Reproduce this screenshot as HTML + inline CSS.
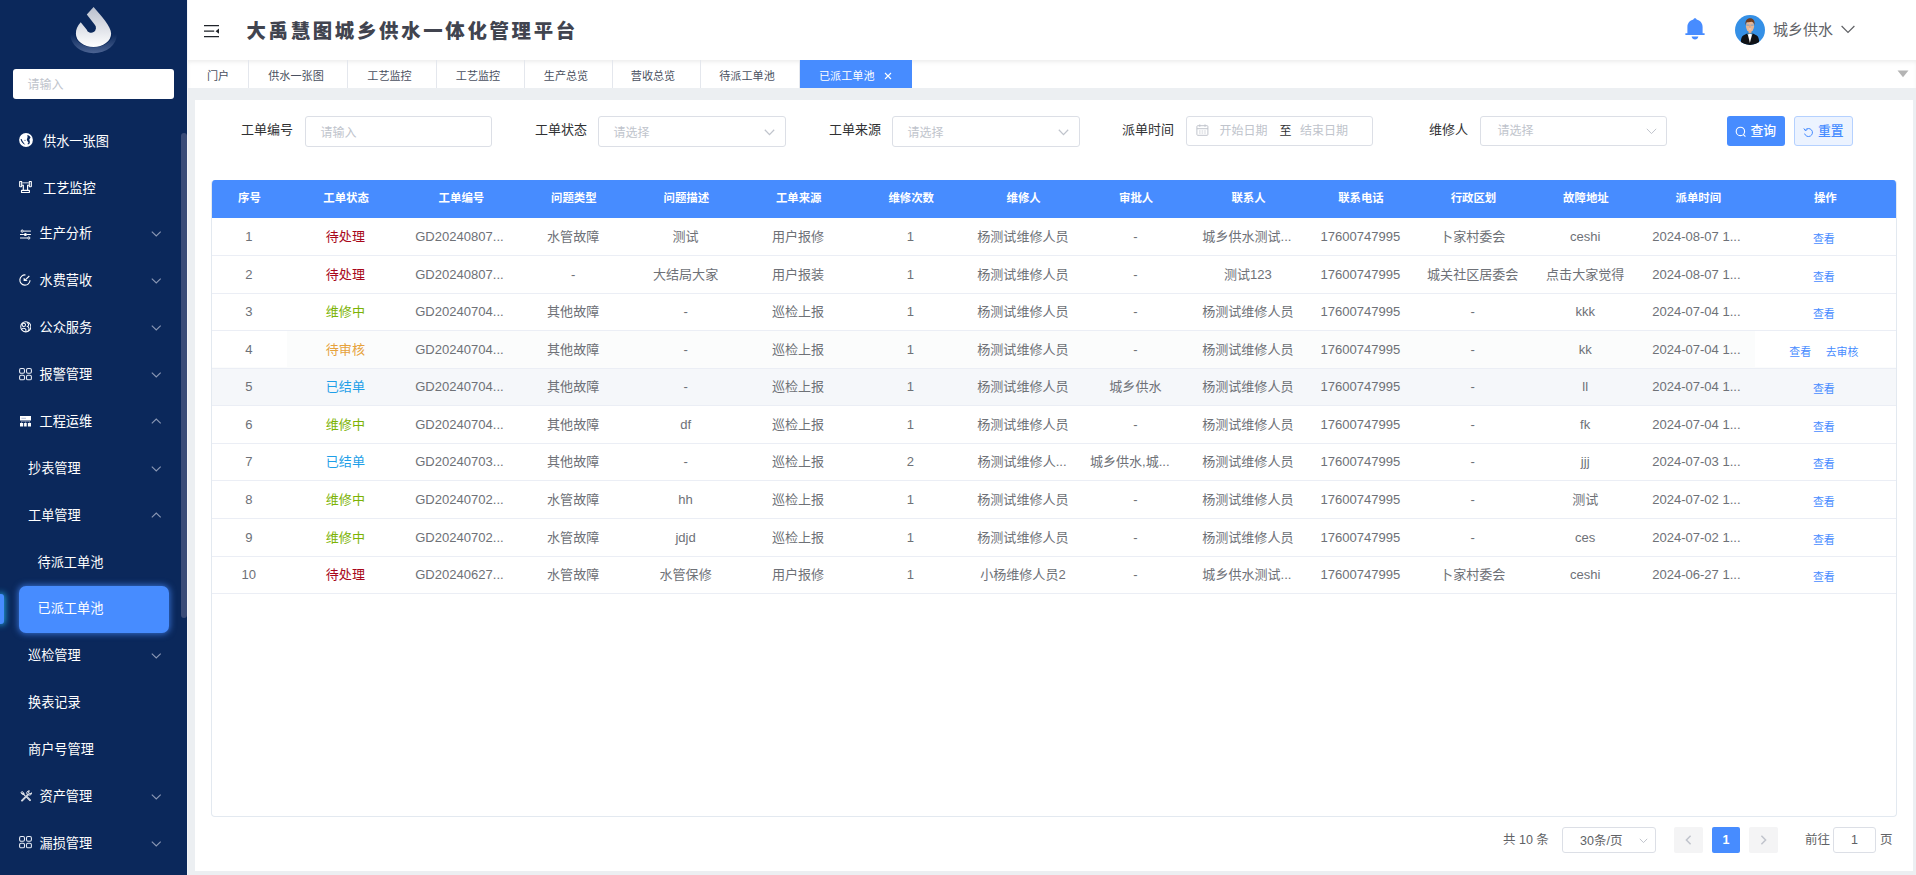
<!DOCTYPE html>
<html lang="zh-CN">
<head>
<meta charset="utf-8">
<title>大禹慧图城乡供水一体化管理平台</title>
<style>
*{box-sizing:border-box;margin:0;padding:0}
html,body{width:1916px;height:875px;overflow:hidden;background:#eceff2;
  font-family:"Liberation Sans","Noto Sans CJK SC",sans-serif;}
body{position:relative}
.abs{position:absolute}
/* ---------- sidebar ---------- */
#side{position:absolute;left:0;top:0;width:187px;height:875px;background:#0b285b;overflow:hidden}
#side .search{position:absolute;left:13px;top:69px;width:161px;height:30px;background:#fff;border-radius:3px;
  font-size:12px;color:#c0c4cc;line-height:33px;padding-left:14.5px}
.mi{position:absolute;height:20px;line-height:20px;color:#fff;font-size:13.2px;white-space:nowrap}
.chev{position:absolute;left:151px;width:10.5px;height:6px}
#active{position:absolute;left:19px;top:586px;width:150px;height:47px;border-radius:7px;background:#478cff;
  box-shadow:0 0 6px 1px rgba(71,140,255,.7)}
#bar{position:absolute;left:-2px;top:594px;width:6px;height:30px;border-radius:3px;background:#478cff;
  box-shadow:0 0 6px 1px rgba(40,200,255,.8)}
#thumb{position:absolute;left:181px;top:133px;width:6px;height:485px;border-radius:3px;background:#3a4c78}
/* ---------- header ---------- */
#head{position:absolute;left:188px;top:0;width:1728px;height:60px;background:#fff}
#title{position:absolute;left:246.5px;top:16px;height:30px;line-height:30px;font-size:19.4px;font-weight:900;letter-spacing:2.7px;color:#41444f;
  white-space:nowrap;font-family:"Liberation Sans","Noto Sans CJK SC",sans-serif}
#tabs{position:absolute;left:188px;top:60px;width:1728px;height:28px;background:#fff;
  box-shadow:inset 0 3px 4px -1px rgba(0,0,0,.075)}
.tab{position:absolute;top:0;height:28px;line-height:32.8px;font-size:11.1px;color:#495060;text-align:center;border-right:1px solid #e4e7ed;white-space:nowrap}
.tab.on{background:#478cff;color:#fff;border-right:none}
#uname{position:absolute;left:1773px;top:20px;height:20px;line-height:20px;font-size:15px;color:#606266;white-space:nowrap}
/* ---------- panel ---------- */
#panel{position:absolute;left:195px;top:100px;width:1718px;height:771px;background:#fff}
.flabel{position:absolute;top:120px;height:20px;line-height:20.6px;font-size:13px;color:#303133;white-space:nowrap}
.finput{position:absolute;top:116px;height:31px;border:1px solid #dcdfe6;border-radius:3px;background:#fff;
  font-size:12px;color:#c0c4cc;line-height:33px;padding-left:14.5px;white-space:nowrap}
.btn{position:absolute;top:116px;height:30px;border-radius:3px;font-size:12.8px;font-weight:500;line-height:30.5px;white-space:nowrap}
/* ---------- table ---------- */
#tbl{position:absolute;left:211px;top:180px;width:1686px;height:637px;border:1px solid #e3e9f0;border-top:none;border-radius:4px;overflow:hidden;background:#fff}
#tin{position:absolute;left:0;top:0;width:1684px;height:635px}
.thead{position:absolute;left:0;top:0;width:1684px;height:38px;background:#478cff}
.th{position:absolute;top:0;height:38px;line-height:36.5px;text-align:center;color:#fff;font-weight:700;font-size:11.4px;white-space:nowrap}
.tr{position:absolute;left:0;width:1684px;border-bottom:1px solid #ebeef5;background:#fff}
.tr.stripe{background:#fbfcfc}
.tr.hover{background:#f5f7fa}
.td{position:absolute;top:0;bottom:1px;line-height:var(--lh);text-align:center;color:#6e7177;font-size:13.05px;white-space:nowrap;overflow:hidden;padding-right:1.4px}
.td.el{text-align:left;padding-left:10px;padding-right:0}
.td.ops{font-size:10.9px;color:#478cff;line-height:var(--lo);padding-right:3px}
.op{margin:0 7.3px}
/* ---------- pagination ---------- */
.pg{position:absolute;font-size:12.5px;color:#606266;white-space:nowrap;height:26px;line-height:26px;top:827px}
.pbtn{position:absolute;top:827px;height:26px;border-radius:2px;background:#f4f4f5}
</style>
</head>
<body>
<!-- ================= SIDEBAR ================= -->
<div id="side">
  <svg class="abs" style="left:68px;top:4px" width="50" height="50" viewBox="0 0 50 50">
    <defs>
      <linearGradient id="lg1" x1="0" y1="0" x2="0" y2="1"><stop offset="0" stop-color="#b9bfcd"/><stop offset="1" stop-color="#ffffff"/></linearGradient>
      <linearGradient id="lg2" x1="0" y1="0" x2="0" y2="1"><stop offset="0" stop-color="#4c6493" stop-opacity="0"/><stop offset="1" stop-color="#4c6493"/></linearGradient>
    </defs>
    <path d="M2.3 30 A23.3 19.3 0 0 0 48.9 30 L44.5 30 A18.9 13.2 0 0 1 6.7 30 Z" fill="url(#lg2)"/>
    <path d="M25.6 2.9 L18.8 10.5 L26.6 20.6 A4.8 4.8 0 1 1 18.6 25.4 L12.7 18.3 C9.4 22 7.9 25.8 7.9 29.4 A17.6 13.7 0 0 0 43.1 29.4 C43.1 22.5 33.4 12 25.6 2.9 Z" fill="url(#lg1)"/>
  </svg>
  <div class="search">请输入</div>

  <div id="active"></div>
  <div id="bar"></div>

  <!-- menu items -->
  <div class="mi" style="top:132px;left:43px">供水一张图</div>
  <div class="mi" style="top:179px;left:43px">工艺监控</div>
  <div class="mi" style="top:224px;left:39.5px">生产分析</div>
  <svg class="chev" style="top:231.3px" viewBox="0 0 10.5 6"><path d="M0.8 0.7L5.25 5L9.7 0.7" stroke="#8a97b4" stroke-width="1.15" fill="none"/></svg>
  <div class="mi" style="top:271px;left:39.5px">水费营收</div>
  <svg class="chev" style="top:278.2px" viewBox="0 0 10.5 6"><path d="M0.8 0.7L5.25 5L9.7 0.7" stroke="#8a97b4" stroke-width="1.15" fill="none"/></svg>
  <div class="mi" style="top:318px;left:39.5px">公众服务</div>
  <svg class="chev" style="top:325.1px" viewBox="0 0 10.5 6"><path d="M0.8 0.7L5.25 5L9.7 0.7" stroke="#8a97b4" stroke-width="1.15" fill="none"/></svg>
  <div class="mi" style="top:365px;left:39.5px">报警管理</div>
  <svg class="chev" style="top:372.0px" viewBox="0 0 10.5 6"><path d="M0.8 0.7L5.25 5L9.7 0.7" stroke="#8a97b4" stroke-width="1.15" fill="none"/></svg>
  <div class="mi" style="top:412px;left:39.5px">工程运维</div>
  <svg class="chev" style="top:417.9px" viewBox="0 0 10.5 6"><path d="M0.8 5.3L5.25 1L9.7 5.3" stroke="#8a97b4" stroke-width="1.15" fill="none"/></svg>
  <div class="mi" style="top:459px;left:28px">抄表管理</div>
  <svg class="chev" style="top:465.9px" viewBox="0 0 10.5 6"><path d="M0.8 0.7L5.25 5L9.7 0.7" stroke="#8a97b4" stroke-width="1.15" fill="none"/></svg>
  <div class="mi" style="top:506px;left:28px">工单管理</div>
  <svg class="chev" style="top:511.6px" viewBox="0 0 10.5 6"><path d="M0.8 5.3L5.25 1L9.7 5.3" stroke="#8a97b4" stroke-width="1.15" fill="none"/></svg>
  <div class="mi" style="top:553px;left:37.5px">待派工单池</div>
  <div class="mi" style="top:599px;left:37.5px">已派工单池</div>
  <div class="mi" style="top:646px;left:28px">巡检管理</div>
  <svg class="chev" style="top:653.4px" viewBox="0 0 10.5 6"><path d="M0.8 0.7L5.25 5L9.7 0.7" stroke="#8a97b4" stroke-width="1.15" fill="none"/></svg>
  <div class="mi" style="top:693px;left:28px">换表记录</div>
  <div class="mi" style="top:740px;left:28px">商户号管理</div>
  <div class="mi" style="top:787px;left:39.5px">资产管理</div>
  <svg class="chev" style="top:794.1px" viewBox="0 0 10.5 6"><path d="M0.8 0.7L5.25 5L9.7 0.7" stroke="#8a97b4" stroke-width="1.15" fill="none"/></svg>
  <div class="mi" style="top:834px;left:39.5px">漏损管理</div>
  <svg class="chev" style="top:841.0px" viewBox="0 0 10.5 6"><path d="M0.8 0.7L5.25 5L9.7 0.7" stroke="#8a97b4" stroke-width="1.15" fill="none"/></svg>
  <!-- icons -->
  <svg class="abs" style="left:18.5px;top:133.05px" width="14" height="14" viewBox="0 0 14 14"><circle cx="7" cy="7" r="6.9" fill="#fff"/><path d="M1.6 5.9C1.7 8.4 3.9 10.9 6.5 11.7C5.2 10.7 3.4 8.6 2.6 6.1Z" fill="#0b285b"/><path d="M8.3 2C9.6 2.2 10.9 3 11.6 4.4L10.3 6.4L10.8 8.6L10.8 10.3L9.2 11.4L8.4 11L9.5 9.7L8.4 8.1L7.8 6.7L8.6 4Z" fill="#0b285b"/><circle cx="6" cy="7.3" r="0.55" fill="#0b285b"/></svg>
  <svg class="abs" style="left:19px;top:181px" width="13" height="13" viewBox="0 0 13 13"><g stroke="#fff" stroke-width="1.15" fill="none"><rect x="0.7" y="0.5" width="2" height="5.2" rx="0.4"/><rect x="10.3" y="0.5" width="2" height="5.2" rx="0.4"/><path d="M3.2 4.3H4.3V9M9.8 4.3H8.6V9"/><rect x="2.5" y="9.4" width="7.9" height="2.1" rx="0.3"/></g><path d="M3.2 1.8H9.8" stroke="#c3cbdc" stroke-width="1.1"/></svg>
  <svg class="abs" style="left:19.9px;top:228.5px" width="11.2" height="11" viewBox="0 0 11.2 11"><g stroke="#fff" stroke-width="1" fill="none"><path d="M3.4 2.1H10.9M0 5.5H3.9M7 5.5H10.9M0 9H7.5"/><circle cx="2.2" cy="2.1" r="1.1"/><circle cx="8.8" cy="9" r="1.1"/></g><circle cx="5.4" cy="5.5" r="1.55" fill="#fff"/></svg>
  <svg class="abs" style="left:19.4px;top:274.05px" width="12" height="12" viewBox="0 0 12 12"><path d="M6.5 0.95A5.1 5.1 0 1 0 11.05 6.2" stroke="#fff" stroke-width="1.1" fill="none"/><path d="M10.3 2L6.6 5.7" stroke="#fff" stroke-width="1.1" fill="none"/><path d="M4.6 3.7V6.95H8.7Z" fill="#fff"/></svg>
  <svg class="abs" style="left:19.8px;top:321.3px" width="11.6" height="11.6" viewBox="0 0 13 13"><g stroke="#fff" stroke-width="1.15" fill="none"><circle cx="6.5" cy="6.5" r="5.7"/><circle cx="4.3" cy="4.3" r="1.9"/><path d="M1.6 9.6C2.8 7.4 5.6 7.6 6.6 9.6C6.8 10.4 6.6 11.4 6.4 12M7.8 1.6C10 2.6 10.2 5.2 8.4 6.2C10.4 7 10.8 9.6 8.8 11.4"/></g></svg>
  <svg class="abs" style="left:19px;top:367.9px" width="14" height="13" viewBox="0 0 14 13"><g stroke="#e6ebf5" stroke-width="1.1" fill="none"><rect x="0.6" y="0.55" width="4.9" height="4.7" rx="1.4"/><rect x="7.5" y="0.55" width="4.9" height="4.7" rx="1.4"/><rect x="0.6" y="7.3" width="4.9" height="4.5" rx="1.4"/><rect x="7.5" y="7.3" width="4.9" height="4.5" rx="1.4"/></g></svg>
  <svg class="abs" style="left:19.9px;top:416px" width="11.2" height="10.6" viewBox="0 0 11.2 10.6"><path d="M0 0H11.2V4.5H0Z M0 7H3.2V10.6H0Z M4.1 7H6.7V10.6H4.1Z M7.9 7H11.2V10.6H7.9Z" fill="#fff"/><path d="M1.4 2.3H6" stroke="#8fa0c4" stroke-width="0.7"/><path d="M1.4 5.2H5.2M6 5.2H9.8M5.6 4.5V7M1.8 5.2L1.4 7M9.4 5.2L9.8 7" stroke="#8b97b3" stroke-width="0.8" fill="none"/></svg>
  <svg class="abs" style="left:19.5px;top:790px" width="12" height="12" viewBox="0 0 12 12"><g stroke="#fff" fill="none" stroke-linecap="round" opacity="0.92"><path d="M2 10.6L8 4.6" stroke-width="1.9"/><path d="M7 7.2L10 10.2" stroke-width="1.9"/><path d="M2.6 3.3L5 5.6" stroke-width="1.2"/><ellipse cx="2.5" cy="3.1" rx="1.6" ry="1.1" transform="rotate(42 2.5 3.1)" stroke-width="0.9"/><path d="M9 0.9C7.2 0.7 6.2 2.4 6.9 3.9M8.8 5C10.4 5.5 11.8 4.4 11.6 2.8L10 4L8.6 3.2L9 0.9" stroke-width="1"/></g><path d="M2.3 10.3L7.7 4.9M7.3 7.5L9.7 9.9" stroke="#0b285b" stroke-width="0.5" stroke-dasharray="0.6 0.6"/></svg>
  <svg class="abs" style="left:19px;top:836.4px" width="14" height="13" viewBox="0 0 14 13"><g stroke="#e6ebf5" stroke-width="1.1" fill="none"><rect x="0.6" y="0.55" width="4.9" height="4.7" rx="1.4"/><rect x="7.5" y="0.55" width="4.9" height="4.7" rx="1.4"/><rect x="0.6" y="7.3" width="4.9" height="4.5" rx="1.4"/><rect x="7.5" y="7.3" width="4.9" height="4.5" rx="1.4"/></g></svg>

  <div id="thumb"></div>
</div>
<div class="abs" style="left:187px;top:0;width:1px;height:875px;background:#f3f5f8"></div>

<!-- ================= HEADER ================= -->
<div id="head"></div>
<svg class="abs" style="left:204px;top:24px" width="16" height="14" viewBox="0 0 16 14"><path d="M0 1.7H15M0 7.2H10.2M0 12.7H15" stroke="#1f2329" stroke-width="1.3" fill="none"/><path d="M15 4.6V9.8L11.6 7.2Z" fill="#1f2329"/></svg>
<div id="title">大禹慧图城乡供水一体化管理平台</div>

<!-- bell -->
<svg class="abs" style="left:1684px;top:17px" width="22" height="24" viewBox="0 0 22 24"><path d="M11 1.2C11.9 1.2 12.5 1.8 12.6 2.5C16.2 3.3 18.6 6.2 18.6 10V16.2H20.6V18H1.4V16.2H3.4V10C3.4 6.2 5.8 3.3 9.4 2.5C9.5 1.8 10.1 1.2 11 1.2Z" fill="#478cff"/><path d="M7.6 19.6H14.4C14 21.4 12.7 22.6 11 22.6C9.3 22.6 8 21.4 7.6 19.6Z" fill="#478cff"/></svg>
<!-- avatar -->
<svg class="abs" style="left:1735px;top:14.8px" width="30" height="30" viewBox="0 0 30 30">
  <defs><clipPath id="cp"><circle cx="15" cy="15" r="15"/></clipPath></defs>
  <circle cx="15" cy="15" r="15" fill="#3590e6"/>
  <g clip-path="url(#cp)">
    <path d="M5.8 30C5.6 25 6.2 21.6 8.2 20.4L13 17.9L15 19L17 17.9L21.8 20.4C23.8 21.6 24.4 25 24.2 30Z" fill="#101216"/>
    <path d="M12.6 18.6L14.9 28L17.3 18.6Z" fill="#fff"/>
    <path d="M12.2 17.2l2.7 1.3l2.7-1.3l0 2.6l-2.7-1.1l-2.7 1.1Z" fill="#3d7fae"/>
    <rect x="13.6" y="15" width="2.8" height="3" fill="#dba886"/>
    <ellipse cx="15" cy="11.2" rx="4.05" ry="5.6" fill="#e8b693"/>
    <path d="M10.5 10.6C9.9 5.6 12.2 3.3 15.1 3.3C18.2 3.3 20.1 5.6 19.5 10.6C19.2 8.4 18.4 7.2 16.8 6.8C15.2 7.4 12.6 7.2 11.6 7.2C10.9 8 10.7 9.2 10.5 10.6Z" fill="#6f3c1f"/>
    <path d="M11.4 10.2h3M15.6 10.2h3" stroke="#8fa3bd" stroke-width="1.2"/>
    <path d="M15 9.4L14.5 12.4H15.4Z" fill="#c98f6e"/>
    <path d="M13.5 13.8Q15 15.4 16.5 13.8Z" fill="#dfeaf5"/>
  </g>
</svg>
<div id="uname">城乡供水</div>
<svg class="abs" style="left:1841px;top:25px" width="14" height="9" viewBox="0 0 14 9"><path d="M0.6 1L7 7.4L13.4 1" stroke="#606266" stroke-width="1.2" fill="none"/></svg>

<!-- ================= TABS ================= -->
<div id="tabs">
  <div class="tab" style="left:0;width:61px;padding-right:0">门户</div>
  <div class="tab" style="left:61px;width:99px;padding-right:4px">供水一张图</div>
  <div class="tab" style="left:160px;width:89px;padding-right:5px">工艺监控</div>
  <div class="tab" style="left:249px;width:88px;padding-right:5px">工艺监控</div>
  <div class="tab" style="left:337px;width:88px;padding-right:5px">生产总览</div>
  <div class="tab" style="left:425px;width:88px;padding-right:7px">营收总览</div>
  <div class="tab" style="left:513px;width:99px;padding-right:6px">待派工单池</div>
  <div class="tab on" style="left:612px;width:112px;text-align:left;padding-left:19px">已派工单池</div>
  <svg class="abs" style="left:696px;top:11.5px" width="8" height="8" viewBox="0 0 8 8"><path d="M1 1L7 7M7 1L1 7" stroke="#fff" stroke-width="1.1"/></svg>
  <svg class="abs" style="left:1709px;top:10px" width="12" height="8" viewBox="0 0 12 8"><path d="M0.5 0.5H11.5L6 7.2Z" fill="#b4b4b4"/></svg>
</div>

<!-- ================= PANEL ================= -->
<div id="panel"></div>

<div class="flabel" style="left:241px">工单编号</div>
<div class="finput" style="left:305px;width:187px">请输入</div>
<div class="flabel" style="left:535px">工单状态</div>
<div class="finput" style="left:598px;width:188px">请选择</div>
<svg class="abs" style="left:764px;top:129px" width="11" height="7" viewBox="0 0 11 7"><path d="M0.8 0.8L5.5 5.6L10.2 0.8" stroke="#c0c4cc" stroke-width="1.25" fill="none"/></svg>
<div class="flabel" style="left:829px">工单来源</div>
<div class="finput" style="left:892px;width:188px">请选择</div>
<svg class="abs" style="left:1058px;top:129px" width="11" height="7" viewBox="0 0 11 7"><path d="M0.8 0.8L5.5 5.6L10.2 0.8" stroke="#c0c4cc" stroke-width="1.25" fill="none"/></svg>
<div class="flabel" style="left:1122px">派单时间</div>
<div class="finput" style="left:1186px;width:187px;height:30px;padding-left:0"></div>
<svg class="abs" style="left:1196px;top:124px" width="13" height="12" viewBox="0 0 13 12"><g stroke="#c0c4cc" stroke-width="1" fill="none"><rect x="0.9" y="1.7" width="11" height="9.6" rx="0.8"/><path d="M0.9 4.7H11.9M3.8 0.4V2.8M9 0.4V2.8"/><path d="M3 7H10M3 9H10" stroke-width="0.8" stroke-dasharray="1.6 1"/></g></svg>
<div class="abs" style="left:1219.5px;top:121px;height:20px;line-height:20.7px;font-size:12px;color:#c0c4cc">开始日期</div>
<div class="abs" style="left:1279.5px;top:121px;height:20px;line-height:20.7px;font-size:12px;color:#303133">至</div>
<div class="abs" style="left:1300px;top:121px;height:20px;line-height:20.7px;font-size:12px;color:#c0c4cc">结束日期</div>
<div class="flabel" style="left:1429px">维修人</div>
<div class="finput" style="left:1480px;width:187px;height:30px;padding-left:16.5px;line-height:29.5px">请选择</div>
<svg class="abs" style="left:1645.5px;top:128px" width="11" height="7" viewBox="0 0 11 7"><path d="M0.8 0.8L5.5 5.6L10.2 0.8" stroke="#c0c4cc" stroke-width="1" fill="none"/></svg>

<div class="btn" style="left:1727px;width:58px;background:#478cff;color:#fff;padding-left:23.5px">查询</div>
<svg class="abs" style="left:1735px;top:126px" width="12" height="12" viewBox="0 0 12 12"><circle cx="5.4" cy="5.4" r="4.2" stroke="#fff" stroke-width="1.1" fill="none"/><path d="M8.4 8.6L10.4 10.6" stroke="#fff" stroke-width="1.1"/></svg>
<div class="btn" style="left:1794px;width:59px;background:#ecf3ff;border:1px solid #b5d1ff;color:#478cff;padding-left:23px;line-height:28px">重置</div>
<svg class="abs" style="left:1803px;top:127px" width="11" height="11" viewBox="0 0 11 11"><path d="M2.2 3.2A4 4 0 1 1 1.6 6.6" stroke="#478cff" stroke-width="1" fill="none"/><path d="M0.8 1.4L2.2 3.6L4.4 2.6" stroke="#478cff" stroke-width="1" fill="none"/></svg>

<!-- ================= TABLE ================= -->
<div id="tbl"><div id="tin">
<div class="thead">
<div class="th" style="left:0.00px;width:75.00px">序号</div>
<div class="th" style="left:75.00px;width:118.18px">工单状态</div>
<div class="th" style="left:193.18px;width:112.45px">工单编号</div>
<div class="th" style="left:305.63px;width:112.45px">问题类型</div>
<div class="th" style="left:418.08px;width:112.45px">问题描述</div>
<div class="th" style="left:530.53px;width:112.45px">工单来源</div>
<div class="th" style="left:642.98px;width:112.45px">维修次数</div>
<div class="th" style="left:755.43px;width:112.45px">维修人</div>
<div class="th" style="left:867.88px;width:112.45px">审批人</div>
<div class="th" style="left:980.33px;width:112.45px">联系人</div>
<div class="th" style="left:1092.78px;width:112.45px">联系电话</div>
<div class="th" style="left:1205.23px;width:112.45px">行政区划</div>
<div class="th" style="left:1317.68px;width:112.45px">故障地址</div>
<div class="th" style="left:1430.13px;width:112.45px">派单时间</div>
<div class="th" style="left:1542.58px;width:141.42px">操作</div>
</div>
<div class="tr" style="top:38px;height:38px;--lh:37px;--lo:42px">
<div class="td" style="left:0.00px;width:75.00px">1</div>
<div class="td" style="left:75.00px;width:118.18px;color:#a8071a">待处理</div>
<div class="td el" style="left:193.18px;width:112.45px">GD20240807...</div>
<div class="td" style="left:305.63px;width:112.45px">水管故障</div>
<div class="td" style="left:418.08px;width:112.45px">测试</div>
<div class="td" style="left:530.53px;width:112.45px">用户报修</div>
<div class="td" style="left:642.98px;width:112.45px">1</div>
<div class="td" style="left:755.43px;width:112.45px">杨测试维修人员</div>
<div class="td" style="left:867.88px;width:112.45px">-</div>
<div class="td el" style="left:980.33px;width:112.45px">城乡供水测试...</div>
<div class="td" style="left:1092.78px;width:112.45px">17600747995</div>
<div class="td" style="left:1205.23px;width:112.45px">卜家村委会</div>
<div class="td" style="left:1317.68px;width:112.45px">ceshi</div>
<div class="td el" style="left:1430.13px;width:112.45px">2024-08-07 1...</div>
<div class="td ops" style="left:1542.58px;width:141.42px"><span class="op">查看</span></div>
</div>
<div class="tr" style="top:76px;height:38px;--lh:37px;--lo:42px">
<div class="td" style="left:0.00px;width:75.00px">2</div>
<div class="td" style="left:75.00px;width:118.18px;color:#a8071a">待处理</div>
<div class="td el" style="left:193.18px;width:112.45px">GD20240807...</div>
<div class="td" style="left:305.63px;width:112.45px">-</div>
<div class="td" style="left:418.08px;width:112.45px">大结局大家</div>
<div class="td" style="left:530.53px;width:112.45px">用户报装</div>
<div class="td" style="left:642.98px;width:112.45px">1</div>
<div class="td" style="left:755.43px;width:112.45px">杨测试维修人员</div>
<div class="td" style="left:867.88px;width:112.45px">-</div>
<div class="td" style="left:980.33px;width:112.45px">测试123</div>
<div class="td" style="left:1092.78px;width:112.45px">17600747995</div>
<div class="td" style="left:1205.23px;width:112.45px">城关社区居委会</div>
<div class="td" style="left:1317.68px;width:112.45px">点击大家觉得</div>
<div class="td el" style="left:1430.13px;width:112.45px">2024-08-07 1...</div>
<div class="td ops" style="left:1542.58px;width:141.42px"><span class="op">查看</span></div>
</div>
<div class="tr" style="top:114px;height:37px;--lh:35px;--lo:40px">
<div class="td" style="left:0.00px;width:75.00px">3</div>
<div class="td" style="left:75.00px;width:118.18px;color:#7cb305">维修中</div>
<div class="td el" style="left:193.18px;width:112.45px">GD20240704...</div>
<div class="td" style="left:305.63px;width:112.45px">其他故障</div>
<div class="td" style="left:418.08px;width:112.45px">-</div>
<div class="td" style="left:530.53px;width:112.45px">巡检上报</div>
<div class="td" style="left:642.98px;width:112.45px">1</div>
<div class="td" style="left:755.43px;width:112.45px">杨测试维修人员</div>
<div class="td" style="left:867.88px;width:112.45px">-</div>
<div class="td" style="left:980.33px;width:112.45px">杨测试维修人员</div>
<div class="td" style="left:1092.78px;width:112.45px">17600747995</div>
<div class="td" style="left:1205.23px;width:112.45px">-</div>
<div class="td" style="left:1317.68px;width:112.45px">kkk</div>
<div class="td el" style="left:1430.13px;width:112.45px">2024-07-04 1...</div>
<div class="td ops" style="left:1542.58px;width:141.42px"><span class="op">查看</span></div>
</div>
<div class="tr stripe" style="top:151px;height:38px;--lh:37px;--lo:42px">
<div class="td" style="left:0.00px;width:75.00px;background:#fff">4</div>
<div class="td" style="left:75.00px;width:118.18px;color:#e6a23c">待审核</div>
<div class="td el" style="left:193.18px;width:112.45px">GD20240704...</div>
<div class="td" style="left:305.63px;width:112.45px">其他故障</div>
<div class="td" style="left:418.08px;width:112.45px">-</div>
<div class="td" style="left:530.53px;width:112.45px">巡检上报</div>
<div class="td" style="left:642.98px;width:112.45px">1</div>
<div class="td" style="left:755.43px;width:112.45px">杨测试维修人员</div>
<div class="td" style="left:867.88px;width:112.45px">-</div>
<div class="td" style="left:980.33px;width:112.45px">杨测试维修人员</div>
<div class="td" style="left:1092.78px;width:112.45px">17600747995</div>
<div class="td" style="left:1205.23px;width:112.45px">-</div>
<div class="td" style="left:1317.68px;width:112.45px">kk</div>
<div class="td el" style="left:1430.13px;width:112.45px">2024-07-04 1...</div>
<div class="td ops" style="left:1542.58px;width:141.42px;background:#fff"><span class="op">查看</span><span class="op">去审核</span></div>
</div>
<div class="tr hover" style="top:189px;height:37px;--lh:35px;--lo:40px">
<div class="td" style="left:0.00px;width:75.00px">5</div>
<div class="td" style="left:75.00px;width:118.18px;color:#1e9fe8">已结单</div>
<div class="td el" style="left:193.18px;width:112.45px">GD20240704...</div>
<div class="td" style="left:305.63px;width:112.45px">其他故障</div>
<div class="td" style="left:418.08px;width:112.45px">-</div>
<div class="td" style="left:530.53px;width:112.45px">巡检上报</div>
<div class="td" style="left:642.98px;width:112.45px">1</div>
<div class="td" style="left:755.43px;width:112.45px">杨测试维修人员</div>
<div class="td" style="left:867.88px;width:112.45px">城乡供水</div>
<div class="td" style="left:980.33px;width:112.45px">杨测试维修人员</div>
<div class="td" style="left:1092.78px;width:112.45px">17600747995</div>
<div class="td" style="left:1205.23px;width:112.45px">-</div>
<div class="td" style="left:1317.68px;width:112.45px">ll</div>
<div class="td el" style="left:1430.13px;width:112.45px">2024-07-04 1...</div>
<div class="td ops" style="left:1542.58px;width:141.42px"><span class="op">查看</span></div>
</div>
<div class="tr" style="top:226px;height:38px;--lh:37px;--lo:42px">
<div class="td" style="left:0.00px;width:75.00px">6</div>
<div class="td" style="left:75.00px;width:118.18px;color:#7cb305">维修中</div>
<div class="td el" style="left:193.18px;width:112.45px">GD20240704...</div>
<div class="td" style="left:305.63px;width:112.45px">其他故障</div>
<div class="td" style="left:418.08px;width:112.45px">df</div>
<div class="td" style="left:530.53px;width:112.45px">巡检上报</div>
<div class="td" style="left:642.98px;width:112.45px">1</div>
<div class="td" style="left:755.43px;width:112.45px">杨测试维修人员</div>
<div class="td" style="left:867.88px;width:112.45px">-</div>
<div class="td" style="left:980.33px;width:112.45px">杨测试维修人员</div>
<div class="td" style="left:1092.78px;width:112.45px">17600747995</div>
<div class="td" style="left:1205.23px;width:112.45px">-</div>
<div class="td" style="left:1317.68px;width:112.45px">fk</div>
<div class="td el" style="left:1430.13px;width:112.45px">2024-07-04 1...</div>
<div class="td ops" style="left:1542.58px;width:141.42px"><span class="op">查看</span></div>
</div>
<div class="tr" style="top:264px;height:37px;--lh:35px;--lo:40px">
<div class="td" style="left:0.00px;width:75.00px">7</div>
<div class="td" style="left:75.00px;width:118.18px;color:#1e9fe8">已结单</div>
<div class="td el" style="left:193.18px;width:112.45px">GD20240703...</div>
<div class="td" style="left:305.63px;width:112.45px">其他故障</div>
<div class="td" style="left:418.08px;width:112.45px">-</div>
<div class="td" style="left:530.53px;width:112.45px">巡检上报</div>
<div class="td" style="left:642.98px;width:112.45px">2</div>
<div class="td el" style="left:755.43px;width:112.45px">杨测试维修人...</div>
<div class="td el" style="left:867.88px;width:112.45px">城乡供水,城...</div>
<div class="td" style="left:980.33px;width:112.45px">杨测试维修人员</div>
<div class="td" style="left:1092.78px;width:112.45px">17600747995</div>
<div class="td" style="left:1205.23px;width:112.45px">-</div>
<div class="td" style="left:1317.68px;width:112.45px">jjj</div>
<div class="td el" style="left:1430.13px;width:112.45px">2024-07-03 1...</div>
<div class="td ops" style="left:1542.58px;width:141.42px"><span class="op">查看</span></div>
</div>
<div class="tr" style="top:301px;height:38px;--lh:37px;--lo:42px">
<div class="td" style="left:0.00px;width:75.00px">8</div>
<div class="td" style="left:75.00px;width:118.18px;color:#7cb305">维修中</div>
<div class="td el" style="left:193.18px;width:112.45px">GD20240702...</div>
<div class="td" style="left:305.63px;width:112.45px">水管故障</div>
<div class="td" style="left:418.08px;width:112.45px">hh</div>
<div class="td" style="left:530.53px;width:112.45px">巡检上报</div>
<div class="td" style="left:642.98px;width:112.45px">1</div>
<div class="td" style="left:755.43px;width:112.45px">杨测试维修人员</div>
<div class="td" style="left:867.88px;width:112.45px">-</div>
<div class="td" style="left:980.33px;width:112.45px">杨测试维修人员</div>
<div class="td" style="left:1092.78px;width:112.45px">17600747995</div>
<div class="td" style="left:1205.23px;width:112.45px">-</div>
<div class="td" style="left:1317.68px;width:112.45px">测试</div>
<div class="td el" style="left:1430.13px;width:112.45px">2024-07-02 1...</div>
<div class="td ops" style="left:1542.58px;width:141.42px"><span class="op">查看</span></div>
</div>
<div class="tr" style="top:339px;height:38px;--lh:37px;--lo:42px">
<div class="td" style="left:0.00px;width:75.00px">9</div>
<div class="td" style="left:75.00px;width:118.18px;color:#7cb305">维修中</div>
<div class="td el" style="left:193.18px;width:112.45px">GD20240702...</div>
<div class="td" style="left:305.63px;width:112.45px">水管故障</div>
<div class="td" style="left:418.08px;width:112.45px">jdjd</div>
<div class="td" style="left:530.53px;width:112.45px">巡检上报</div>
<div class="td" style="left:642.98px;width:112.45px">1</div>
<div class="td" style="left:755.43px;width:112.45px">杨测试维修人员</div>
<div class="td" style="left:867.88px;width:112.45px">-</div>
<div class="td" style="left:980.33px;width:112.45px">杨测试维修人员</div>
<div class="td" style="left:1092.78px;width:112.45px">17600747995</div>
<div class="td" style="left:1205.23px;width:112.45px">-</div>
<div class="td" style="left:1317.68px;width:112.45px">ces</div>
<div class="td el" style="left:1430.13px;width:112.45px">2024-07-02 1...</div>
<div class="td ops" style="left:1542.58px;width:141.42px"><span class="op">查看</span></div>
</div>
<div class="tr" style="top:377px;height:37px;--lh:35px;--lo:40px">
<div class="td" style="left:0.00px;width:75.00px">10</div>
<div class="td" style="left:75.00px;width:118.18px;color:#a8071a">待处理</div>
<div class="td el" style="left:193.18px;width:112.45px">GD20240627...</div>
<div class="td" style="left:305.63px;width:112.45px">水管故障</div>
<div class="td" style="left:418.08px;width:112.45px">水管保修</div>
<div class="td" style="left:530.53px;width:112.45px">用户报修</div>
<div class="td" style="left:642.98px;width:112.45px">1</div>
<div class="td" style="left:755.43px;width:112.45px">小杨维修人员2</div>
<div class="td" style="left:867.88px;width:112.45px">-</div>
<div class="td el" style="left:980.33px;width:112.45px">城乡供水测试...</div>
<div class="td" style="left:1092.78px;width:112.45px">17600747995</div>
<div class="td" style="left:1205.23px;width:112.45px">卜家村委会</div>
<div class="td" style="left:1317.68px;width:112.45px">ceshi</div>
<div class="td el" style="left:1430.13px;width:112.45px">2024-06-27 1...</div>
<div class="td ops" style="left:1542.58px;width:141.42px"><span class="op">查看</span></div>
</div>
</div></div>

<!-- ================= PAGINATION ================= -->
<div class="pg" style="left:1503px">共 10 条</div>
<div class="abs" style="left:1562px;top:827px;width:94px;height:26px;border:1px solid #dcdfe6;border-radius:3px;background:#fff"></div>
<div class="pg" style="left:1580px;top:827.7px">30条/页</div>
<svg class="abs" style="left:1639px;top:838px" width="9" height="6" viewBox="0 0 9 6"><path d="M0.8 0.8L4.5 4.6L8.2 0.8" stroke="#c0c4cc" stroke-width="1" fill="none"/></svg>
<div class="pbtn" style="left:1674px;width:29px"></div>
<svg class="abs" style="left:1685px;top:835px" width="7" height="10" viewBox="0 0 7 10"><path d="M5.6 0.8L1.4 5L5.6 9.2" stroke="#c0c4cc" stroke-width="1.5" fill="none"/></svg>
<div class="pbtn" style="left:1712px;width:28px;background:#478cff;color:#fff;font-weight:700;font-size:12.5px;text-align:center;line-height:26px">1</div>
<div class="pbtn" style="left:1749px;width:29px"></div>
<svg class="abs" style="left:1760px;top:835px" width="7" height="10" viewBox="0 0 7 10"><path d="M1.4 0.8L5.6 5L1.4 9.2" stroke="#c0c4cc" stroke-width="1.5" fill="none"/></svg>
<div class="pg" style="left:1805px">前往</div>
<div class="abs" style="left:1833px;top:827px;width:43px;height:26px;border:1px solid #dcdfe6;border-radius:3px;background:#fff;text-align:center;font-size:12.5px;line-height:24px;color:#606266">1</div>
<div class="pg" style="left:1880px">页</div>
</body>
</html>
